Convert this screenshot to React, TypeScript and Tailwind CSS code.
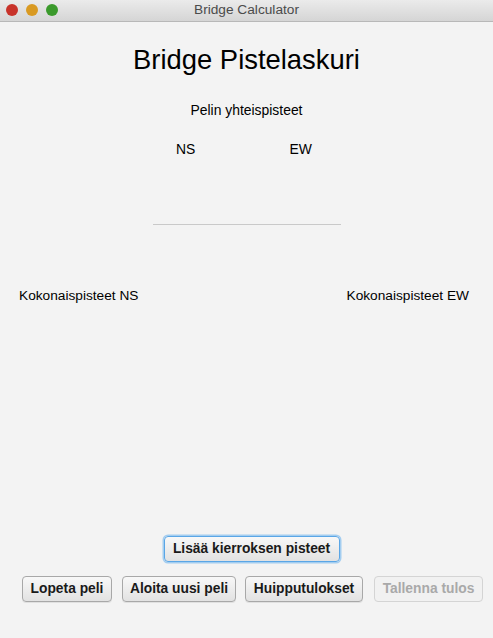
import React from "react";

const font = { fontFamily: '"Helvetica Neue", "Liberation Sans", Arial, sans-serif' };

function Btn({ children, disabled, focus }: { children: React.ReactNode; disabled?: boolean; focus?: boolean }) {
  return (
    <div
      className={
        "h-[26px] flex items-center justify-center rounded-[4px] border text-[13.8px] font-bold " +
        (disabled
          ? "border-[#d4d4d4] bg-[#f1f1f1] text-[#a9a9a9]"
          : focus
          ? "border-[#5aa6e6] bg-gradient-to-b from-[#f8f8f8] to-[#e2e2e2] text-[#1a1a1a] shadow-[0_0_0_1.5px_#a3cdf0]"
          : "border-[#a8a8a8] bg-gradient-to-b from-[#f8f8f8] to-[#e2e2e2] text-[#1a1a1a] shadow-[0_1px_0_rgba(0,0,0,0.08)]")
      }
    >
      {children}
    </div>
  );
}

export default function App() {
  return (
    <div className="w-[493px] h-[638px] bg-[#f3f3f3] flex flex-col" style={font}>
      <div className="h-[22px] relative flex items-center justify-center bg-gradient-to-b from-[#ebebeb] to-[#d5d5d5] border-b border-[#b8b8b8]">
        <div className="absolute left-[6px] top-[4px] flex gap-[8px]">
          <div className="w-[12px] h-[12px] rounded-full bg-[#c8332a]" />
          <div className="w-[12px] h-[12px] rounded-full bg-[#d99a22]" />
          <div className="w-[12px] h-[12px] rounded-full bg-[#3b9a2c]" />
        </div>
        <span className="text-[13.7px] text-[#4b4b4b]">Bridge Calculator</span>
      </div>
      <div className="flex flex-col items-center text-black">
        <div className="mt-[22px] text-[27.4px] leading-[32px]">Bridge Pistelaskuri</div>
        <div className="mt-[26px] text-[13.9px] leading-[16px]">Pelin yhteispisteet</div>
        <div className="mt-[23px] flex w-[136px] justify-between text-[13.9px] leading-[16px] ml-[-5px]">
          <span>NS</span>
          <span>EW</span>
        </div>
        <div className="mt-[67px] w-[188px] h-px bg-[#c9c9c9]" />
      </div>
      <div className="mt-[63px] flex justify-between px-[19px] pr-[24px] text-[13.7px] leading-[16px] text-black">
        <span>Kokonaispisteet NS</span>
        <span>Kokonaispisteet EW</span>
      </div>
      <div className="flex-1" />
      <div className="flex justify-center mb-[14px] pl-[10px]">
        <div className="w-[176px]">
          <Btn focus>Lisää kierroksen pisteet</Btn>
        </div>
      </div>
      <div className="flex pl-[22px] gap-[10px] mb-[36px]">
        <div className="w-[90px]"><Btn>Lopeta peli</Btn></div>
        <div className="w-[114px]"><Btn>Aloita uusi peli</Btn></div>
        <div className="w-[118px] ml-[-1px]"><Btn>Huipputulokset</Btn></div>
        <div className="w-[109px] ml-[1px]"><Btn disabled>Tallenna tulos</Btn></div>
      </div>
    </div>
  );
}
